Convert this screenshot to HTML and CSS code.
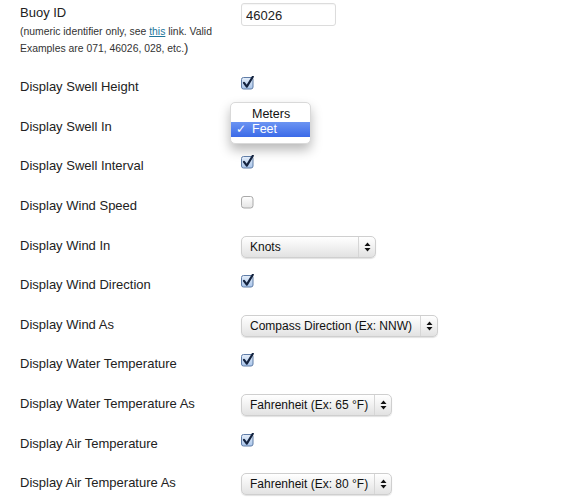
FILE: index.html
```html
<!DOCTYPE html>
<html>
<head>
<meta charset="utf-8">
<link rel="stylesheet" href="styles.css">
</head>
<body>
<svg width="0" height="0" class="defs">
  <defs>
    <linearGradient id="cbOn" x1="0" y1="0" x2="0" y2="1">
      <stop offset="0" stop-color="#e6effa"/>
      <stop offset="1" stop-color="#a8c4ea"/>
    </linearGradient>
    <linearGradient id="cbOff" x1="0" y1="0" x2="0" y2="1">
      <stop offset="0" stop-color="#ffffff"/>
      <stop offset="1" stop-color="#e4e4e4"/>
    </linearGradient>
  </defs>
</svg>
<div class="form">
  <div class="row row-buoy">
    <div class="label">
      <div class="label-text">Buoy ID</div>
      <div class="help">(numeric identifier only, see <a href="#">this</a> link. Valid<br>Examples are 071, 46026, 028, etc.<span class="paren">)</span></div>
    </div>
    <div class="field"><input class="text" type="text" value="46026"></div>
  </div>

  <div class="rows">
    <div class="row">
      <div class="label-text">Display Swell Height</div>
      <div class="field"><svg class="cb" width="14" height="14" viewBox="0 0 14 14"><rect x="0.5" y="1.5" width="11.5" height="11.5" rx="2" fill="url(#cbOn)" stroke="#5f7ca6"/><path d="M3 6.8 L5.8 10.6 L11.8 0.8" fill="none" stroke="#14233f" stroke-width="2.2" stroke-linecap="round" stroke-linejoin="round"/></svg></div>
    </div>
    <div class="row">
      <div class="label-text">Display Swell In</div>
      <div class="field field-popup">
        <div class="popup">
          <div class="opt">Meters</div>
          <div class="opt sel"><span class="tick">✓</span>Feet</div>
        </div>
      </div>
    </div>
    <div class="row">
      <div class="label-text">Display Swell Interval</div>
      <div class="field"><svg class="cb" width="14" height="14" viewBox="0 0 14 14"><rect x="0.5" y="1.5" width="11.5" height="11.5" rx="2" fill="url(#cbOn)" stroke="#5f7ca6"/><path d="M3 6.8 L5.8 10.6 L11.8 0.8" fill="none" stroke="#14233f" stroke-width="2.2" stroke-linecap="round" stroke-linejoin="round"/></svg></div>
    </div>
    <div class="row">
      <div class="label-text">Display Wind Speed</div>
      <div class="field"><svg class="cb" width="14" height="14" viewBox="0 0 14 14"><rect x="0.5" y="1.5" width="11.5" height="11.5" rx="2.5" fill="url(#cbOff)" stroke="#a9a9a9"/></svg></div>
    </div>
    <div class="row">
      <div class="label-text">Display Wind In</div>
      <div class="field"><div class="select w-knots"><span class="sel-text">Knots</span><span class="arrows"><svg width="7" height="10" viewBox="0 0 7 10"><path d="M3.5 0.5 L6.5 4 L0.5 4 Z M3.5 9.5 L6.5 6 L0.5 6 Z" fill="#111"/></svg></span></div></div>
    </div>
    <div class="row">
      <div class="label-text">Display Wind Direction</div>
      <div class="field"><svg class="cb" width="14" height="14" viewBox="0 0 14 14"><rect x="0.5" y="1.5" width="11.5" height="11.5" rx="2" fill="url(#cbOn)" stroke="#5f7ca6"/><path d="M3 6.8 L5.8 10.6 L11.8 0.8" fill="none" stroke="#14233f" stroke-width="2.2" stroke-linecap="round" stroke-linejoin="round"/></svg></div>
    </div>
    <div class="row">
      <div class="label-text">Display Wind As</div>
      <div class="field"><div class="select w-compass"><span class="sel-text">Compass Direction (Ex: NNW)</span><span class="arrows"><svg width="7" height="10" viewBox="0 0 7 10"><path d="M3.5 0.5 L6.5 4 L0.5 4 Z M3.5 9.5 L6.5 6 L0.5 6 Z" fill="#111"/></svg></span></div></div>
    </div>
    <div class="row">
      <div class="label-text">Display Water Temperature</div>
      <div class="field"><svg class="cb" width="14" height="14" viewBox="0 0 14 14"><rect x="0.5" y="1.5" width="11.5" height="11.5" rx="2" fill="url(#cbOn)" stroke="#5f7ca6"/><path d="M3 6.8 L5.8 10.6 L11.8 0.8" fill="none" stroke="#14233f" stroke-width="2.2" stroke-linecap="round" stroke-linejoin="round"/></svg></div>
    </div>
    <div class="row">
      <div class="label-text">Display Water Temperature As</div>
      <div class="field"><div class="select w-temp"><span class="sel-text">Fahrenheit (Ex: 65 °F)</span><span class="arrows"><svg width="7" height="10" viewBox="0 0 7 10"><path d="M3.5 0.5 L6.5 4 L0.5 4 Z M3.5 9.5 L6.5 6 L0.5 6 Z" fill="#111"/></svg></span></div></div>
    </div>
    <div class="row">
      <div class="label-text">Display Air Temperature</div>
      <div class="field"><svg class="cb" width="14" height="14" viewBox="0 0 14 14"><rect x="0.5" y="1.5" width="11.5" height="11.5" rx="2" fill="url(#cbOn)" stroke="#5f7ca6"/><path d="M3 6.8 L5.8 10.6 L11.8 0.8" fill="none" stroke="#14233f" stroke-width="2.2" stroke-linecap="round" stroke-linejoin="round"/></svg></div>
    </div>
    <div class="row">
      <div class="label-text">Display Air Temperature As</div>
      <div class="field"><div class="select w-temp"><span class="sel-text">Fahrenheit (Ex: 80 °F)</span><span class="arrows"><svg width="7" height="10" viewBox="0 0 7 10"><path d="M3.5 0.5 L6.5 4 L0.5 4 Z M3.5 9.5 L6.5 6 L0.5 6 Z" fill="#111"/></svg></span></div></div>
    </div>
  </div>
</div>
</body>
</html>
```

FILE: styles.css
```css
html, body {
  margin: 0;
  padding: 0;
  background: #fff;
}
body {
  font-family: "Liberation Sans", Arial, sans-serif;
  color: #222;
  font-size: 13px;
}
.defs {
  position: absolute;
  width: 0;
  height: 0;
}
.form {
  padding: 3px 0 0 20px;
}
.row {
  display: grid;
  grid-template-columns: 221px 1fr;
  height: 39.65px;
}
.row-buoy {
  height: auto;
}
.label-text {
  font-size: 13px;
  line-height: 19px;
  margin-top: 0;
  color: #222;
}
.help {
  font-size: 10.4px;
  line-height: 17px;
  color: #333;
  margin-top: 1px;
}
.help a {
  color: #21759b;
}
.help .paren {
  font-size: 13px;
  line-height: 10px;
}
.rows {
  padding-top: 20px;
}
.field {
  position: relative;
}
.text {
  box-sizing: border-box;
  width: 95px;
  height: 23px;
  border: 1px solid #dcdcdc;
  border-radius: 3px;
  padding: 2px 4px 0;
  font-family: "Liberation Sans", Arial, sans-serif;
  font-size: 13px;
  color: #222;
  box-shadow: inset 0 1px 1px rgba(0,0,0,0.04);
  margin: 0;
}
.cb {
  display: block;
  margin-top: -1px;
}
.select {
  box-sizing: border-box;
  height: 22px;
  display: flex;
  align-items: stretch;
  border: 1px solid #cfcfcf;
  border-radius: 5px;
  background: linear-gradient(#ffffff, #f1f1f1 50%, #e2e2e2);
  box-shadow: 0 1px 1px rgba(0,0,0,0.12);
  font-size: 12px;
  color: #111;
}
.w-knots { width: 135px; }
.w-compass { width: 197px; }
.w-temp { width: 151px; }
.sel-text {
  flex: 1;
  padding-left: 8px;
  line-height: 20px;
  white-space: nowrap;
  overflow: hidden;
}
.arrows {
  width: 16px;
  border-left: 1px solid #d6d6d6;
  display: flex;
  align-items: center;
  justify-content: center;
}
.popup {
  position: absolute;
  left: -11px;
  top: -15px;
  width: 81px;
  padding: 4px 0 6px;
  background: #fff;
  border-radius: 5px;
  border: 1px solid #d9d9d9;
  box-sizing: border-box;
  box-shadow: 0 6px 12px rgba(0,0,0,0.28);
  font-size: 12.5px;
  color: #111;
}
.opt {
  height: 15px;
  line-height: 15px;
  padding-left: 21px;
  position: relative;
}
.opt.sel {
  background: linear-gradient(#6b94f2, #3b6ae8);
  color: #fff;
}
.tick {
  position: absolute;
  left: 5px;
  top: 0;
  font-family: "DejaVu Sans", sans-serif;
  font-size: 12px;
  font-weight: bold;
}
```
